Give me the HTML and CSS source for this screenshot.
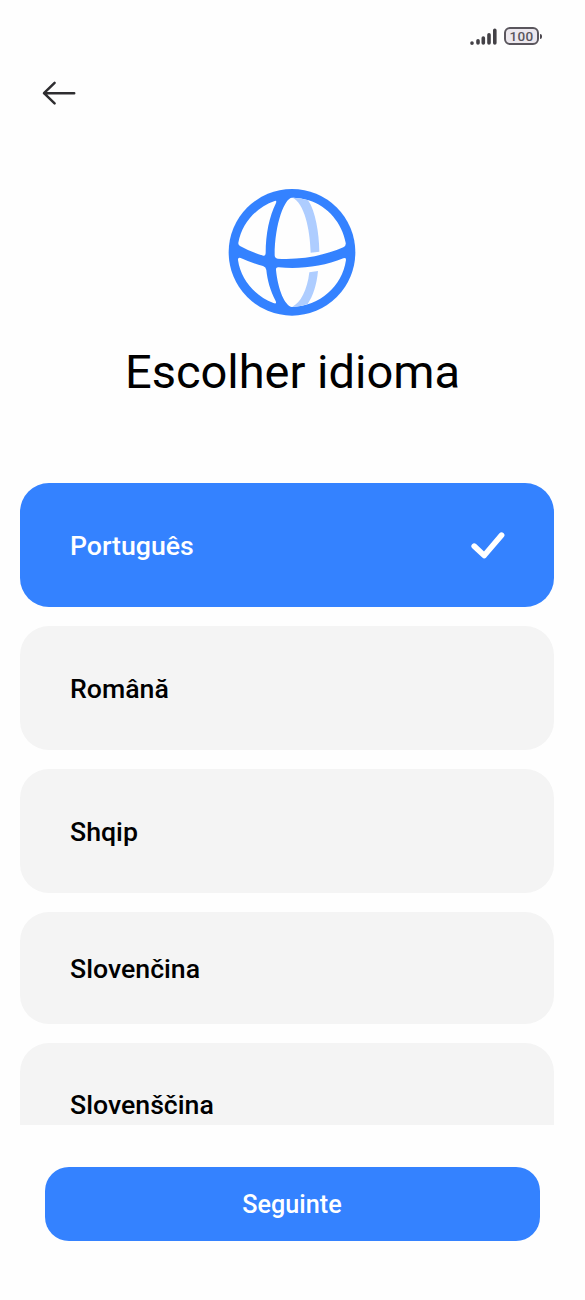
FILE: index.html
```html
<!DOCTYPE html>
<html lang="pt">
<head>
<meta charset="utf-8">
<title>Escolher idioma</title>
<link rel="stylesheet" href="styles.css">
</head>
<body>
<div class="screen">
  <header class="status">
    <svg class="signal" width="28" height="20" viewBox="0 0 28 20" aria-hidden="true">
      <path d="M2 16.3v-.3M8 16v-2.2M13.3 16v-5M19 16V7.8M24.8 16V3.2"/>
    </svg>
    <div class="battery"><span>100</span></div>
  </header>
  <nav class="nav">
    <button class="back" aria-label="Voltar">
      <svg width="34" height="26" viewBox="0 0 34 26"><path d="M2 13.2H32.2M12.6 2.8 2 13.2l10.6 10.2"/></svg>
    </button>
  </nav>
  <section class="hero">
    <svg class="globe" width="145" height="145" viewBox="0 0 435 435" aria-hidden="true">
      <circle class="blue" cx="216" cy="217" r="190"/>
      <g class="white">
        <path d="M164 63C108 82 66 130 55 188Q54 195 60 198Q92 216 130 227Q137 228 137 220C137 160 148 110 168 69Q171 61 164 63Z"/>
        <path d="M216 53C195 53 164 130 164 226Q164 235 173 236C240 240 310 228 370 202Q379 197 377 188C366 130 325 80 266 61Q240 52 216 53Z"/>
        <path d="M62 234Q53 231 54 240C62 300 108 350 160 369Q171 373 167 363C150 330 142 300 139 270Q138 261 129 258Q95 249 62 234Z"/>
        <path d="M176 262Q167 261 168 270C174 330 195 378 216 381C300 378 366 320 378 240Q379 231 370 235C310 260 240 268 176 262Z"/>
      </g>
      <g class="pale">
        <path d="M218 53Q242 53 264 61C287 94 297 160 298 215L272 218C270 145 252 70 218 53Z"/>
        <path d="M268 277L294 273C290 315 279 348 263 372Q240 381 217 380C241 370 262 330 268 277Z"/>
      </g>
    </svg>
    <h1 class="title">Escolher idioma</h1>
  </section>
  <main class="list">
    <div class="item selected">
      <span>Português</span>
      <svg class="check" width="36" height="30" viewBox="0 0 36 30" aria-hidden="true"><path d="M4.2 15.1 14.2 24.5 31.6 4.1"/></svg>
    </div>
    <div class="item"><span>Română</span></div>
    <div class="item"><span>Shqip</span></div>
    <div class="item short"><span>Slovenčina</span></div>
    <div class="item last"><span>Slovenščina</span></div>
  </main>
  <footer class="footer"><button class="next">Seguinte</button></footer>
</div>
</body>
</html>
```

FILE: styles.css
```css
* { box-sizing: border-box; }
body { margin: 0; background: #fff; }
.screen {
  width: 585px;
  height: 1300px;
  display: flex;
  flex-direction: column;
  overflow: hidden;
  background: #fefefe;
  color: #000;
  font-family: Roboto, sans-serif;
}
button { border: 0; padding: 0; background: none; font: inherit; }
svg { display: block; flex: none; }
path { stroke-linecap: round; stroke-linejoin: round; }

.status {
  height: 70px;
  padding: 27px 43px 0 0;
  display: flex;
  justify-content: flex-end;
  align-items: flex-start;
  gap: 6px;
}
.signal { fill: none; stroke: #434146; stroke-width: 3.6; }
.battery {
  display: flex;
  align-items: center;
}
.battery span {
  width: 35px;
  height: 18px;
  border: 2px solid #5a565d;
  border-radius: 6px;
  background: #ece8ee;
  color: #5a565d;
  font-size: 13.5px;
  font-weight: 500;
  line-height: 15px;
  letter-spacing: .3px;
  text-align: center;
}
.battery::after {
  content: "";
  width: 2px;
  height: 5px;
  margin-left: 1px;
  border-radius: 0 2px 2px 0;
  background: #4b474e;
}

.nav { height: 110px; padding: 10px 42px; }
.back svg { fill: none; stroke: #2e2d30; stroke-width: 2.5; }

.hero {
  height: 302px;
  display: flex;
  flex-direction: column;
  align-items: center;
}
.blue { fill: #3482ff; }
.white { fill: #fefefe; }
.pale { fill: #aecdff; }
.title {
  margin: 19px 0 0;
  font-size: 47px;
  font-weight: 400;
  line-height: 56px;
}

.list {
  height: 643px;
  padding: .6px 31px 0 19.5px;
  display: flex;
  flex-direction: column;
  gap: 18.8px;
  overflow: hidden;
}
.item {
  flex: none;
  height: 124.2px;
  padding: 2.4px 48px 0 50.5px;
  display: flex;
  align-items: center;
  justify-content: space-between;
  border-radius: 29px;
  background: #f4f4f4;
  font-size: 26.7px;
  font-weight: 500;
}
.item.selected { background: #3482ff; color: #fff; }
.item.short { height: 112.3px; }
.item.last { height: 124px; padding-top: 1px; }
.check { fill: none; stroke: #fff; stroke-width: 5.6; }

.footer { padding: 41.8px 45.5px 0 44.5px; }
.next {
  display: block;
  width: 100%;
  height: 74px;
  padding-top: 1px;
  border-radius: 24px;
  background: #3482ff;
  color: #fff;
  font-size: 25.2px;
  font-weight: 500;
}
```
